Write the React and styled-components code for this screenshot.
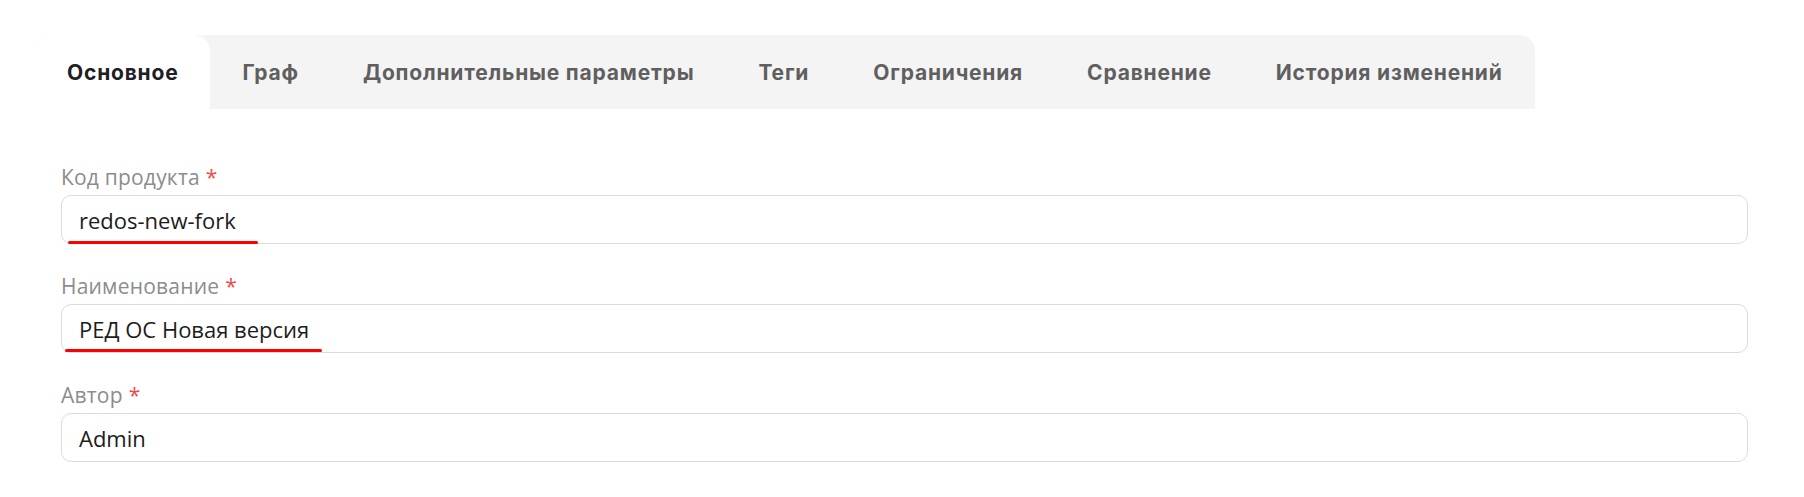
import React from 'react';
import styled, { createGlobalStyle } from 'styled-components';

const Global = createGlobalStyle`
  html, body { margin: 0; padding: 0; background: #ffffff; }
  body { font-family: "Open Sans", "Noto Sans", sans-serif; }
`;

const Page = styled.div`
  padding: 35px 56px 40px 35px;
`;

const TabBar = styled.div`
  display: inline-flex;
  height: 74px;
  background: #f4f4f4;
  border-radius: 16px 16px 0 0;
`;

const Tab = styled.div`
  display: flex;
  align-items: center;
  padding: 0 32px;
  font-family: Inter, "Liberation Sans", sans-serif;
  font-weight: 700;
  font-size: 21px;
  letter-spacing: 0.8px;
  white-space: nowrap;
  color: ${p => (p.$active ? '#1f2024' : '#5f5f5f')};
  background: ${p => (p.$active ? '#ffffff' : 'transparent')};
  border-radius: 16px 16px 0 0;
`;

const Form = styled.div`
  margin: 56px 0 0 26px;
  display: flex;
  flex-direction: column;
  gap: 30px;
`;

const Field = styled.div`
  display: flex;
  flex-direction: column;
`;

const Label = styled.div`
  font-size: 21px;
  letter-spacing: 0.2px;
  line-height: 24px;
  color: #8c8c8c;
  margin-bottom: 6px;
`;

const Required = styled.span`
  color: #f2494b;
  margin-left: 6px;
`;

const InputWrap = styled.div`
  position: relative;
`;

const Input = styled.div`
  box-sizing: border-box;
  height: 49px;
  border: 1px solid #dbdbdb;
  border-radius: 10px;
  padding: 0 17px;
  display: flex;
  align-items: center;
  font-size: 22px;
  color: #1c1c1c;
  background: #fff;
`;

const Scribble = styled.div`
  position: absolute;
  left: ${p => p.$left}px;
  width: ${p => p.$width}px;
  bottom: ${p => p.$bottom}px;
  height: 3px;
  background: #ff0000;
  border-radius: 2px;
`;

const tabs = [
  'Основное',
  'Граф',
  'Дополнительные параметры',
  'Теги',
  'Ограничения',
  'Сравнение',
  'История изменений',
];

const fields = [
  { label: 'Код продукта', value: 'redos-new-fork', mark: { left: 7, width: 190, bottom: 0 } },
  { label: 'Наименование', value: 'РЕД ОС Новая версия', mark: { left: 4, width: 257, bottom: 1 } },
  { label: 'Автор', value: 'Admin' },
];

export default function App() {
  return (
    <>
      <Global />
      <Page>
        <TabBar>
          {tabs.map((t, i) => (
            <Tab key={t} $active={i === 0}>{t}</Tab>
          ))}
        </TabBar>
        <Form>
          {fields.map(f => (
            <Field key={f.label}>
              <Label>
                {f.label}
                <Required>*</Required>
              </Label>
              <InputWrap>
                <Input>{f.value}</Input>
                {f.mark && (
                  <Scribble $left={f.mark.left} $width={f.mark.width} $bottom={f.mark.bottom} />
                )}
              </InputWrap>
            </Field>
          ))}
        </Form>
      </Page>
    </>
  );
}
